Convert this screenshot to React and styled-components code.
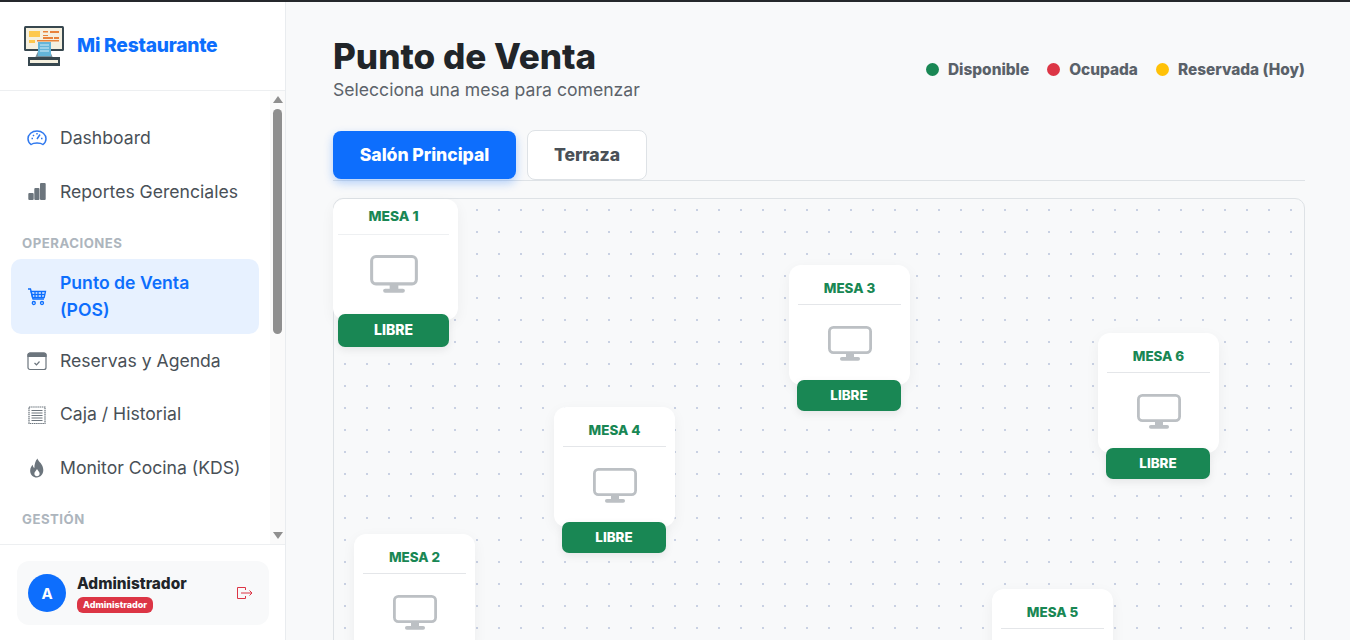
import React from "react";
import styled, { createGlobalStyle } from "styled-components";

const Global = createGlobalStyle`
  html, body { margin: 0; padding: 0; height: 100%; overflow: hidden; }
  body { font-family: Inter, "Liberation Sans", sans-serif; background: #f8f9fa; color: #212529; }
  * { box-sizing: border-box; }
`;

const Page = styled.div`
  height: 640px;
  display: flex;
  flex-direction: column;
  border-top: 2px solid #25282c;
  overflow: hidden;
`;
const Layout = styled.div`
  flex: 1;
  display: flex;
  min-height: 0;
`;
const Sidebar = styled.aside`
  width: 286px;
  flex: none;
  background: #fff;
  border-right: 1px solid #e9ecef;
  display: flex;
  flex-direction: column;
`;
const Brand = styled.div`
  height: 89px;
  flex: none;
  display: flex;
  align-items: center;
  gap: 13px;
  padding: 0 0 2px 24px;
  border-bottom: 1px solid #edeff1;
  svg { margin-top: 2px; }
`;
const BrandName = styled.span`
  font-size: 19.2px;
  font-weight: 800;
  color: #0d6efd;
  letter-spacing: -0.22px;
`;
const NavRow = styled.div`
  flex: 1;
  min-height: 0;
  display: flex;
`;
const NavList = styled.nav`
  flex: 1;
  min-width: 0;
  overflow: hidden;
  padding: 22.5px 11px 0;
  display: flex;
  flex-direction: column;
  gap: 4.2px;
`;
const NavItem = styled.a`
  flex: none;
  display: flex;
  align-items: center;
  gap: 13px;
  width: 248px;
  padding: ${p => (p.$active ? "11px" : "11.5px")} 16px;
  margin-bottom: ${p => (p.$active ? "-2px" : "0")};
  border-radius: 10px;
  font-size: 17.6px;
  line-height: 26.4px;
  font-weight: ${p => (p.$active ? 600 : 400)};
  color: ${p => (p.$active ? "#0d6efd" : "#495057")};
  background: ${p => (p.$active ? "#e7f1ff" : "transparent")};
  svg { flex: none; }
`;
const NavLabel = styled.span`
  width: ${p => (p.$narrow ? "150px" : "auto")};
  white-space: ${p => (p.$narrow ? "normal" : "nowrap")};
`;
const Section = styled.div`
  flex: none;
  font-size: 13.2px;
  line-height: 18px;
  font-weight: 700;
  letter-spacing: 0.5px;
  color: #adb5bd;
  padding: 12.9px 0 3.6px 11px;
  box-sizing: content-box;
`;
const ScrollTrack = styled.div`
  width: 15px;
  flex: none;
  background: #fafafa;
  display: flex;
  flex-direction: column;
  align-items: center;
  padding-top: 5px;
`;
const ArrowUp = styled.div`
  width: 0;
  height: 0;
  border-left: 5px solid transparent;
  border-right: 5px solid transparent;
  border-bottom: 7px solid #8f8f8f;
`;
const ArrowDown = styled.div`
  width: 0;
  height: 0;
  margin-top: 198px;
  border-left: 5px solid transparent;
  border-right: 5px solid transparent;
  border-top: 7px solid #8f8f8f;
`;
const Thumb = styled.div`
  width: 9px;
  height: 225px;
  margin-top: 6px;
  border-radius: 5px;
  background: #8f8f8f;
`;
const Footer = styled.div`
  height: 96px;
  flex: none;
  border-top: 1px solid #edeff1;
  padding: 16px 16px 15px 17px;
`;
const UserCard = styled.div`
  height: 64px;
  border-radius: 12px;
  background: #f8f9fa;
  display: flex;
  align-items: center;
  padding: 0 16px 0 11px;
`;
const Avatar = styled.div`
  width: 38px;
  height: 38px;
  border-radius: 50%;
  background: #0d6efd;
  color: #fff;
  font-weight: 700;
  font-size: 15px;
  display: flex;
  align-items: center;
  justify-content: center;
  margin-right: 11px;
`;
const UserInfo = styled.div`
  flex: 1;
  display: flex;
  flex-direction: column;
  align-items: flex-start;
  gap: 4px;
  margin-top: 2px;
`;
const UserName = styled.div`
  font-size: 15.4px;
  line-height: 18px;
  font-weight: 800;
  color: #212529;
`;
const RoleBadge = styled.span`
  background: #dc3545;
  color: #fff;
  font-size: 9px;
  font-weight: 800;
  line-height: 16px;
  height: 16px;
  padding: 0 6px;
  border-radius: 6px;
`;
const Main = styled.main`
  flex: 1;
  min-width: 0;
  padding: 35px 45px 0 47px;
  display: flex;
  flex-direction: column;
  overflow: hidden;
`;
const Header = styled.header`
  display: flex;
  justify-content: space-between;
  align-items: center;
  flex: none;
`;
const Title = styled.h1`
  margin: 0;
  font-size: 35.1px;
  line-height: 38px;
  font-weight: 800;
  color: #212529;
`;
const Subtitle = styled.p`
  margin: 3px 0 0;
  font-size: 17.6px;
  line-height: 24px;
  color: #5c636a;
`;
const Legend = styled.div`
  display: flex;
  gap: 18px;
`;
const LegendItem = styled.div`
  display: flex;
  align-items: center;
  gap: 9px;
  font-size: 15.4px;
  font-weight: 800;
  color: #5a6169;
`;
const Dot = styled.span`
  width: 13px;
  height: 13px;
  border-radius: 50%;
  background: ${p => p.$color};
`;
const Tabs = styled.div`
  flex: none;
  margin-top: 28px;
  height: 51px;
  display: flex;
  gap: 11px;
  border-bottom: 1px solid #dee2e6;
`;
const Tab = styled.button`
  height: ${p => (p.$active ? "48px" : "50px")};
  margin-top: ${p => (p.$active ? "1px" : "0")};
  width: ${p => (p.$active ? "183px" : "120px")};
  padding: 0 0 2px;
  font: 800 17.6px Inter, sans-serif;
  letter-spacing: -0.05px;
  border-radius: 8px;
  border: ${p => (p.$active ? "none" : "1px solid #dee2e6")};
  background: ${p => (p.$active ? "#0d6efd" : "#fff")};
  color: ${p => (p.$active ? "#fff" : "#495057")};
  box-shadow: ${p => (p.$active ? "0 4px 10px rgba(13,110,253,.3)" : "none")};
`;
const Canvas = styled.div`
  position: relative;
  flex: none;
  margin-top: 17px;
  height: 700px;
  border: 1px solid #dee2e6;
  border-radius: 10px;
  background-color: #f8f9fa;
  background-image: radial-gradient(#c9d1e3 1px, transparent 1.4px);
  background-size: 22px 22px;
`;
const Table = styled.div`
  position: absolute;
  left: ${p => p.$x}px;
  top: ${p => p.$y}px;
  width: ${p => (p.$big ? 125 : 121)}px;
  display: flex;
  flex-direction: column;
`;
const Card = styled.div`
  width: 100%;
  height: ${p => (p.$big ? 121 : 120)}px;
  padding: ${p => (p.$big ? "9px 9px 0 5px" : "15px 9px 0")};
  background: #fff;
  border-radius: 12px;
  box-shadow: 0 4px 14px rgba(0,0,0,.05);
  display: flex;
  flex-direction: column;
  align-items: center;
`;
const TableName = styled.div`
  width: 100%;
  text-align: center;
  font-size: ${p => (p.$big ? 13.8 : 13.4)}px;
  line-height: 17px;
  font-weight: 800;
  color: #198754;
  padding-bottom: ${p => (p.$big ? 9 : 7)}px;
  border-bottom: 1px solid ${p => (p.$big ? "#eef0f2" : "#e4e6e9")};
`;
const MonitorWrap = styled.div`
  margin-top: ${p => (p.$big ? 20 : 21)}px;
  display: flex;
`;
const Status = styled.div`
  width: ${p => (p.$big ? 111 : 104)}px;
  height: ${p => (p.$big ? 33 : 31)}px;
  padding-bottom: 2px;
  margin: ${p => (p.$big ? "-6px 0 0 5px" : "-5px 0 0 8px")};
  z-index: 1;
  border-radius: 7px;
  background: #198754;
  color: #fff;
  font-size: ${p => (p.$big ? 14 : 13.4)}px;
  font-weight: 800;
  display: flex;
  align-items: center;
  justify-content: center;
  box-shadow: 0 3px 8px rgba(0,0,0,.08);
`;

const Monitor = ({ big }) => (
  <svg width={big ? 48 : 44} height={big ? 38 : 35} viewBox="0 0 44 35" fill="none">
    <rect x="1.400" y="1.400" width="41.200" height="25.200" rx="4" stroke="#bcc0c4" strokeWidth="2.800" />
    <path d="M18 27h8v4.500h-8z" fill="#bcc0c4" />
    <rect x="12" y="31" width="20" height="3.800" rx="1.800" fill="#bcc0c4" />
  </svg>
);

const Logo = () => (
  <svg width="40" height="40" viewBox="0 0 40 40">
    <rect x="0" y="0" width="40" height="25" rx="1.500" fill="#37474f" />
    <rect x="2" y="2" width="36" height="21" fill="#f5f0df" />
    <rect x="5" y="5" width="11" height="6" fill="#fdc84d" />
    <rect x="5" y="14" width="6" height="3" fill="#fdc84d" />
    <path d="M19 5h5v1.500h-5zM26 5h9v2h-9zM19 9h5v1h-5zM19 11h10v2h-10zM30 11h5v2h-5zM13 14h22v1.500H13z" fill="#e8833a" />
    <path d="M11 32l4-9h10l4 9z" fill="#78909c" />
    <rect x="14" y="16" width="13" height="14" fill="#64b5d9" />
    <path d="M16 19h9M16 22h9M16 25h9" stroke="#d6eef8" strokeWidth="1.200" />
    <rect x="4" y="31" width="32" height="9" fill="#37474f" />
    <rect x="6" y="34" width="28" height="3" fill="#f5f0df" />
  </svg>
);

const Gauge = () => (
  <svg width="20" height="20" viewBox="0 0 20 20" fill="none" stroke="#2f78ee" strokeWidth="1.500">
    <path d="M4 16.500C2 15 1 13 1 10.800 1 6.400 5 3 10 3s9 3.400 9 7.800c0 2.200-1 4.200-3 5.700-1.500-1.200-3.600-1.600-6-1.600s-4.500.4-6 1.600z" />
    <path d="M10 11l3-4.500M10 5v1.500M4.500 10.500H6M14 10.500h1.500M6 7l1 1" />
  </svg>
);
const Bars = () => (
  <svg width="20" height="20" viewBox="0 0 20 20" fill="#6c757d">
    <rect x="1.300" y="11" width="5.400" height="7" rx="1" />
    <rect x="7.300" y="6" width="5.200" height="12" rx="1" />
    <rect x="13" y="1" width="5.700" height="17" rx="1" />
  </svg>
);
const Cart = () => (
  <svg width="20" height="20" viewBox="0 0 20 20" fill="none" stroke="#0d6efd" strokeWidth="1.300">
    <path d="M1 2h2.500l2.500 10h11" />
    <path d="M4 4.500h14.500l-1.300 6H5.500zM8 4.500v6M11 4.500v6M14.500 4.500v6M4.500 7.500h13.500" />
    <circle cx="6.800" cy="16" r="1.500" />
    <circle cx="15" cy="16" r="1.500" />
  </svg>
);
const Calendar = () => (
  <svg width="20" height="20" viewBox="0 0 20 20" fill="none" stroke="#6c757d" strokeWidth="1.200">
    <rect x="1" y="2" width="18" height="16.500" rx="2" />
    <path d="M1 4a2 2 0 012-2h14a2 2 0 012 2v1.500H1z" fill="#6c757d" />
    <path d="M7.500 12l2 1.800 3-3.300" />
  </svg>
);
const Receipt = () => (
  <svg width="20" height="20" viewBox="0 0 20 20" fill="none" stroke="#6c757d" strokeWidth="1.200">
    <rect x="2" y="2" width="16" height="16.500" strokeDasharray="1.500 .6" />
    <path d="M4.500 5.500h11M4.500 8h11M4.500 10.500h11M4.500 13h11M4.500 15.500h11" />
  </svg>
);
const Fire = () => (
  <svg width="20" height="20" viewBox="1.500 0.500 17 19" fill="#6c757d">
    <path fillRule="evenodd" d="M10.500 1c.5 3 5.500 5 5.500 11 0 4-2.800 7-6.200 7C6.500 19 3.500 16.300 3.500 12.500c0-2.500 1.300-4.300 2.500-5.500 0 1.500.5 2.500 1.500 3C7.500 6.500 8.500 3 10.500 1zM10 11c-.5 1.500-2.500 2.500-2.500 4.500 0 1.500 1.100 2.300 2.500 2.300s2.500-.8 2.500-2.300C12.500 13.500 10.500 12.500 10 11z" />
  </svg>
);
const Logout = () => (
  <svg width="16" height="12" viewBox="0 0 16 12" fill="none" stroke="#dc3545" strokeWidth="1">
    <path d="M8.500 3V.5H.5v11h8V9M4 6h11M12.500 3.500L15 6l-2.500 2.500" />
  </svg>
);

const tables = [
  { n: 1, x: -1, y: 0, big: true },
  { n: 2, x: 20, y: 335 },
  { n: 3, x: 455, y: 66 },
  { n: 4, x: 220, y: 208 },
  { n: 5, x: 658, y: 390 },
  { n: 6, x: 764, y: 134 },
];

export default function App() {
  return (
    <Page>
      <Global />
      <Layout>
        <Sidebar>
          <Brand>
            <Logo />
            <BrandName>Mi Restaurante</BrandName>
          </Brand>
          <NavRow>
            <NavList>
              <NavItem><Gauge /><NavLabel>Dashboard</NavLabel></NavItem>
              <NavItem><Bars /><NavLabel>Reportes Gerenciales</NavLabel></NavItem>
              <Section>OPERACIONES</Section>
              <NavItem $active><Cart /><NavLabel $narrow>Punto de Venta (POS)</NavLabel></NavItem>
              <NavItem><Calendar /><NavLabel>Reservas y Agenda</NavLabel></NavItem>
              <NavItem><Receipt /><NavLabel>Caja / Historial</NavLabel></NavItem>
              <NavItem><Fire /><NavLabel>Monitor Cocina (KDS)</NavLabel></NavItem>
              <Section>GESTIÓN</Section>
            </NavList>
            <ScrollTrack>
              <ArrowUp />
              <Thumb />
              <ArrowDown />
            </ScrollTrack>
          </NavRow>
          <Footer>
            <UserCard>
              <Avatar>A</Avatar>
              <UserInfo>
                <UserName>Administrador</UserName>
                <RoleBadge>Administrador</RoleBadge>
              </UserInfo>
              <Logout />
            </UserCard>
          </Footer>
        </Sidebar>
        <Main>
          <Header>
            <div>
              <Title>Punto de Venta</Title>
              <Subtitle>Selecciona una mesa para comenzar</Subtitle>
            </div>
            <Legend>
              <LegendItem><Dot $color="#198754" />Disponible</LegendItem>
              <LegendItem><Dot $color="#dc3545" />Ocupada</LegendItem>
              <LegendItem><Dot $color="#ffc107" />Reservada (Hoy)</LegendItem>
            </Legend>
          </Header>
          <Tabs>
            <Tab $active>Salón Principal</Tab>
            <Tab>Terraza</Tab>
          </Tabs>
          <Canvas>
            {tables.map(t => (
              <Table key={t.n} $x={t.x} $y={t.y} $big={t.big}>
                <Card $big={t.big}>
                  <TableName $big={t.big}>MESA {t.n}</TableName>
                  <MonitorWrap $big={t.big}><Monitor big={t.big} /></MonitorWrap>
                </Card>
                <Status $big={t.big}>LIBRE</Status>
              </Table>
            ))}
          </Canvas>
        </Main>
      </Layout>
    </Page>
  );
}
